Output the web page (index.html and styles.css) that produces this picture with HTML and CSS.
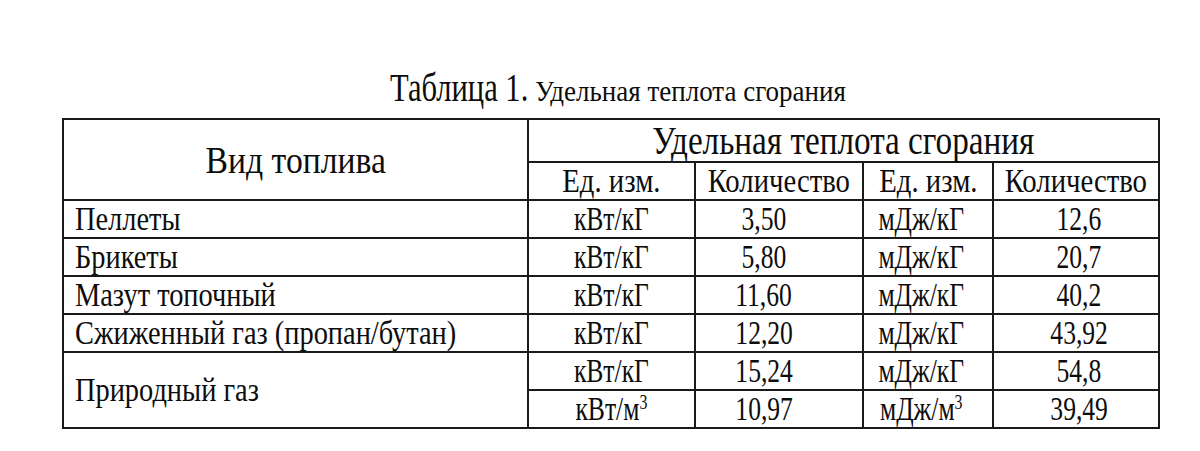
FILE: index.html
```html
<!DOCTYPE html>
<html lang="ru">
<head>
<meta charset="utf-8">
<title>Таблица 1</title>
<link rel="stylesheet" href="styles.css">
</head>
<body>
<div class="page">
  <div class="title"><span class="t1">Таблица 1.</span><span class="t2">Удельная теплота сгорания</span></div>
  <table class="heat">
    <colgroup>
      <col class="c-name">
      <col class="c-unit">
      <col class="c-qty">
      <col class="c-unit2">
      <col class="c-qty2">
    </colgroup>
    <tr class="r-h1">
      <td rowspan="2" class="center h-name"><span class="sx">Вид топлива</span></td>
      <td colspan="4" class="center big"><span class="sx">Удельная теплота сгорания</span></td>
    </tr>
    <tr class="r h2">
      <td class="center"><span class="sx">Ед. изм.</span></td>
      <td class="center"><span class="sx">Количество</span></td>
      <td class="center"><span class="sx">Ед. изм.</span></td>
      <td class="center"><span class="sx">Количество</span></td>
    </tr>
    <tr class="r">
      <td class="name"><span class="sx sl">Пеллеты</span></td>
      <td class="center"><span class="sx">кВт/кГ</span></td>
      <td class="num"><span class="sx">3,50</span></td>
      <td class="unit2"><span class="sx">мДж/кГ</span></td>
      <td class="num2"><span class="sx">12,6</span></td>
    </tr>
    <tr class="r">
      <td class="name"><span class="sx sl">Брикеты</span></td>
      <td class="center"><span class="sx">кВт/кГ</span></td>
      <td class="num"><span class="sx">5,80</span></td>
      <td class="unit2"><span class="sx">мДж/кГ</span></td>
      <td class="num2"><span class="sx">20,7</span></td>
    </tr>
    <tr class="r">
      <td class="name"><span class="sx sl">Мазут топочный</span></td>
      <td class="center"><span class="sx">кВт/кГ</span></td>
      <td class="num"><span class="sx">11,60</span></td>
      <td class="unit2"><span class="sx">мДж/кГ</span></td>
      <td class="num2"><span class="sx">40,2</span></td>
    </tr>
    <tr class="r">
      <td class="name"><span class="sx sl">Сжиженный газ (пропан/бутан)</span></td>
      <td class="center"><span class="sx">кВт/кГ</span></td>
      <td class="num"><span class="sx">12,20</span></td>
      <td class="unit2"><span class="sx">мДж/кГ</span></td>
      <td class="num2"><span class="sx">43,92</span></td>
    </tr>
    <tr class="r">
      <td rowspan="2" class="name"><span class="sx sl">Природный газ</span></td>
      <td class="center"><span class="sx">кВт/кГ</span></td>
      <td class="num"><span class="sx">15,24</span></td>
      <td class="unit2"><span class="sx">мДж/кГ</span></td>
      <td class="num2"><span class="sx">54,8</span></td>
    </tr>
    <tr class="r">
      <td class="center"><span class="sx">кВт/м<sup>3</sup></span></td>
      <td class="num"><span class="sx">10,97</span></td>
      <td class="unit2"><span class="sx">мДж/м<sup>3</sup></span></td>
      <td class="num2"><span class="sx">39,49</span></td>
    </tr>
  </table>
</div>
</body>
</html>
```
FILE: styles.css
```css
html, body {
  margin: 0;
  padding: 0;
  background: #ffffff;
}
body {
  font-family: "Liberation Serif", "Times New Roman", serif;
  color: #0d0d0d;
}
.page {
  padding: 64px 0 0 62px;
  width: 1100px;
}
.title {
  height: 54px;
  line-height: 46px;
  padding-left: 328px;
  white-space: nowrap;
}
.t1 {
  display: inline-block;
  font-size: 41px;
  transform: scaleX(0.745);
  transform-origin: left center;
  margin-right: -41px;
}
.t2 {
  display: inline-block;
  font-size: 30px;
  transform: scaleX(0.9);
  transform-origin: left center;
}
.sx {
  display: inline-block;
  transform: scaleX(0.775);
  transform-origin: center;
  white-space: nowrap;
}
.sl {
  transform-origin: left center;
  transform: scaleX(0.86);
}
.heat {
  border-collapse: collapse;
  table-layout: fixed;
  width: 1098px;
  border: 2px solid #3a3a3a;
  font-size: 33px;
}
.heat td {
  border: 2px solid #1a1a1a;
  padding: 0;
  line-height: 32px;
  vertical-align: middle;
}
.c-name { width: 465px; }
.c-unit { width: 167px; }
.c-qty { width: 168px; }
.c-unit2 { width: 130px; }
.c-qty2 { width: 166px; }
.r-h1 { height: 43px; }
.r { height: 38px; }
.center { text-align: center; }
.h-name { font-size: 38px; }
.h-name .sx { transform: scaleX(0.886); }
.big { font-size: 40px; }
.big .sx { transform: scaleX(0.83); }
.h2 td { font-size: 33px; }
.h2 .sx { transform: scaleX(0.87); }
.name { padding-left: 11px !important; font-size: 33px; }
.num { text-align: center; padding-right: 30px !important; }
.unit2 { text-align: center; padding-right: 14px !important; }
.num2 { text-align: center; padding-left: 6px !important; }
sup {
  font-size: 0.62em;
  line-height: 0;
  vertical-align: 0.55em;
}
```
